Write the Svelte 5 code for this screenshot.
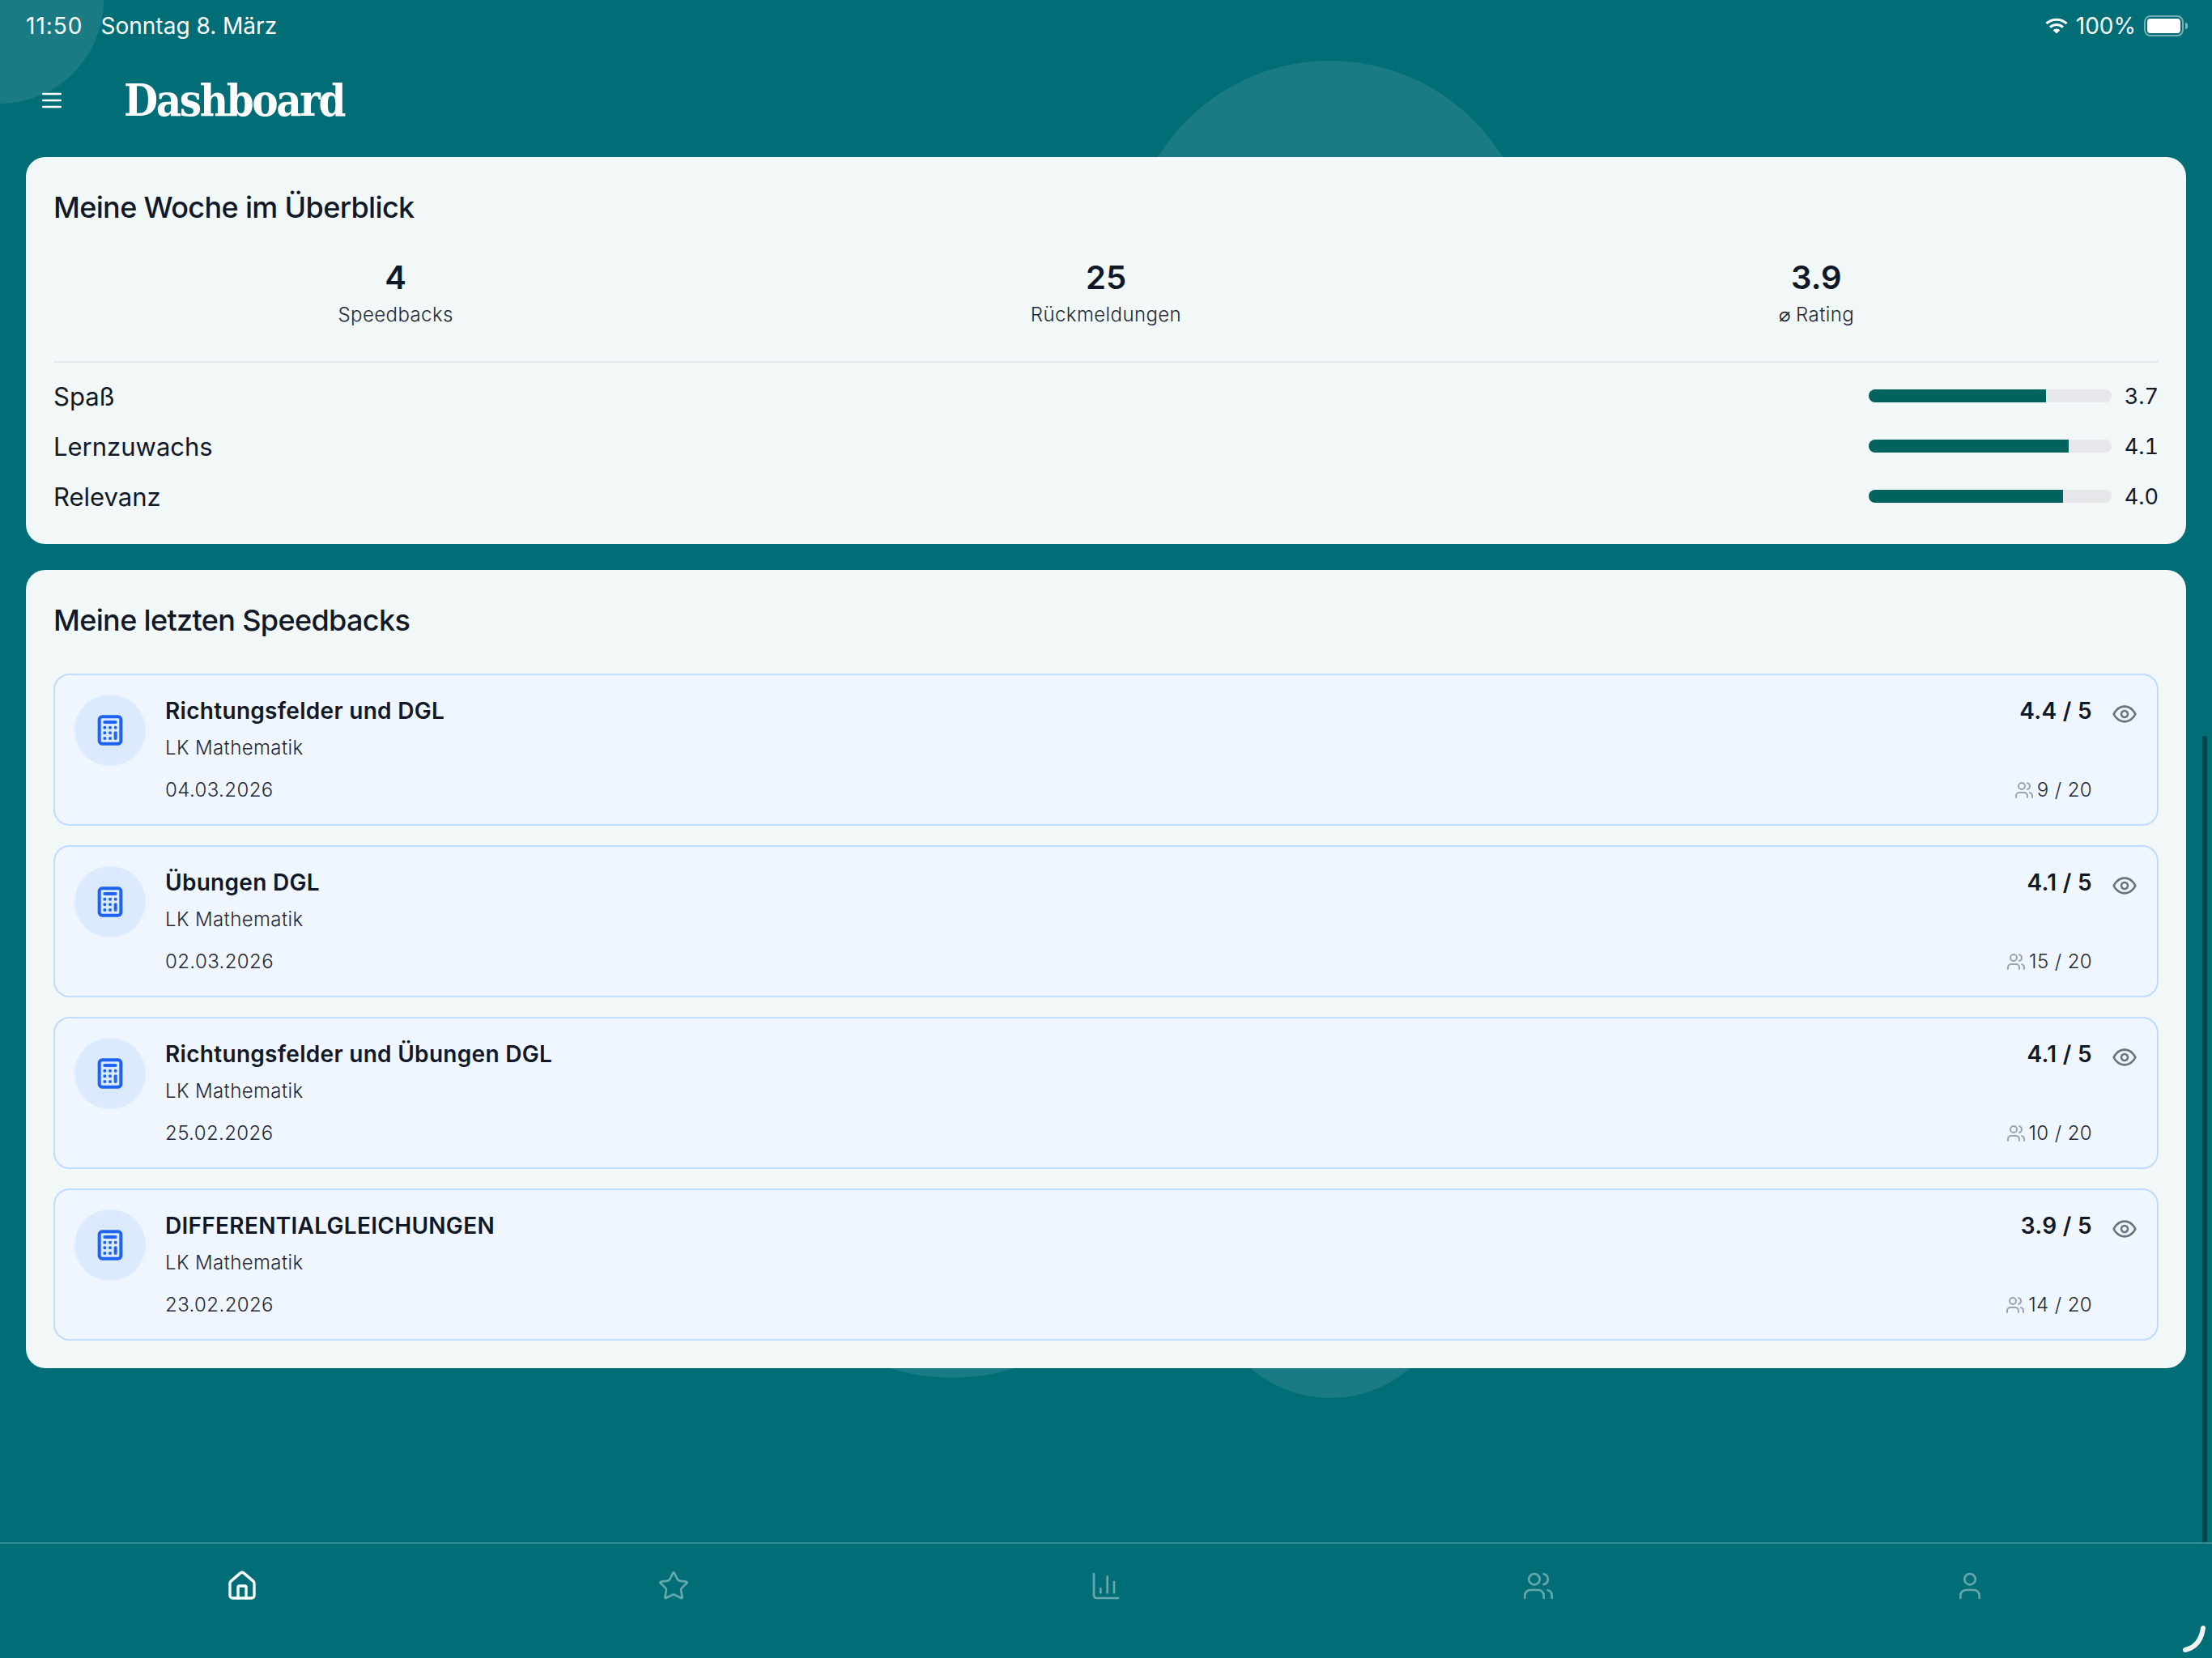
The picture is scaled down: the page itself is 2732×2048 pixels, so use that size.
<script>
  const stats = [
    { value: '4', label: 'Speedbacks' },
    { value: '25', label: 'Rückmeldungen' },
    { value: '3.9', label: '⌀ Rating' }
  ];

  const ratings = [
    { label: 'Spaß', value: '3.7', pct: 73 },
    { label: 'Lernzuwachs', value: '4.1', pct: 82.4 },
    { label: 'Relevanz', value: '4.0', pct: 80 }
  ];

  const speedbacks = [
    { title: 'Richtungsfelder und DGL', date: '04.03.2026', score: '4.4', count: '9 / 20' },
    { title: 'Übungen DGL', date: '02.03.2026', score: '4.1', count: '15 / 20' },
    { title: 'Richtungsfelder und Übungen DGL', date: '25.02.2026', score: '4.1', count: '10 / 20' },
    { title: 'DIFFERENTIALGLEICHUNGEN', date: '23.02.2026', score: '3.9', count: '14 / 20' }
  ];
</script>

<div class="page">
  <div class="blob blob-corner"></div>
  <div class="blob blob-top"></div>
  <div class="blob blob-left"></div>
  <div class="blob blob-small"></div>

  <div class="statusbar">
    <div class="status-left">
      <span class="time">11:50</span>
      <span>Sonntag 8. März</span>
    </div>
    <div class="status-right">
      <svg class="wifi" viewBox="0 0 28 20" width="28" height="20">
        <path d="M1.5 7.2a18 18 0 0 1 25 0" fill="none" stroke="#fff" stroke-width="3" />
        <path d="M6 11.6a11.6 11.6 0 0 1 16 0" fill="none" stroke="#fff" stroke-width="3" />
        <path d="M9.6 15.2 14 19.6l4.4-4.4a6.4 6.4 0 0 0-8.8 0z" fill="#fff" />
      </svg>
      <span>100%</span>
      <div class="battery">
        <div class="battery-fill"></div>
      </div>
      <div class="battery-nub"></div>
    </div>
  </div>

  <header class="topbar">
    <svg class="lucide menu" viewBox="0 0 24 24" width="32" height="32">
      <line x1="4" y1="6" x2="20" y2="6" />
      <line x1="4" y1="12" x2="20" y2="12" />
      <line x1="4" y1="18" x2="20" y2="18" />
    </svg>
    <h1>Dashboard</h1>
  </header>

  <main class="content">
    <section class="card week">
      <h2>Meine Woche im Überblick</h2>
      <div class="stats">
        {#each stats as stat}
          <div class="stat">
            <div class="stat-value">{stat.value}</div>
            <div class="stat-label">{stat.label}</div>
          </div>
        {/each}
      </div>
      <div class="ratings">
        {#each ratings as rating}
          <div class="rating">
            <span class="rating-label">{rating.label}</span>
            <div class="rating-right">
              <div class="track">
                <div class="fill" style="width: {rating.pct}%"></div>
              </div>
              <span class="rating-value">{rating.value}</span>
            </div>
          </div>
        {/each}
      </div>
    </section>

    <section class="card recent">
      <h2>Meine letzten Speedbacks</h2>
      <div class="list">
        {#each speedbacks as item}
          <article class="item">
            <div class="item-icon">
              <svg class="lucide calc" viewBox="0 0 24 24" width="40" height="40">
                <rect x="4" y="2" width="16" height="20" rx="2" />
                <line x1="8" y1="6" x2="16" y2="6" />
                <line x1="16" y1="14" x2="16" y2="18" />
                <path d="M16 10h.01M12 10h.01M8 10h.01M12 14h.01M8 14h.01M12 18h.01M8 18h.01" />
              </svg>
            </div>
            <div class="item-main">
              <div class="item-title">{item.title}</div>
              <div class="item-sub">LK Mathematik</div>
              <div class="item-date">{item.date}</div>
            </div>
            <div class="item-side">
              <div class="item-score">{item.score} / 5</div>
              <div class="item-count">
                <svg class="lucide" viewBox="0 0 24 24" width="24" height="24">
                  <path d="M16 21v-2a4 4 0 0 0-4-4H6a4 4 0 0 0-4 4v2" />
                  <circle cx="9" cy="7" r="4" />
                  <path d="M22 21v-2a4 4 0 0 0-3-3.87" />
                  <path d="M16 3.13a4 4 0 0 1 0 7.75" />
                </svg>
                <span>{item.count}</span>
              </div>
            </div>
            <svg class="lucide eye" viewBox="0 0 24 24" width="32" height="32">
              <path d="M2 12s3-7 10-7 10 7 10 7-3 7-10 7-10-7-10-7Z" />
              <circle cx="12" cy="12" r="3" />
            </svg>
          </article>
        {/each}
      </div>
    </section>
  </main>

  <nav class="tabs">
    <div class="tab active">
      <svg class="lucide" viewBox="0 0 24 24" width="40" height="40">
        <path d="M15 21v-8a1 1 0 0 0-1-1h-4a1 1 0 0 0-1 1v8" />
        <path d="M3 10a2 2 0 0 1 .709-1.528l7-5.999a2 2 0 0 1 2.582 0l7 5.999A2 2 0 0 1 21 10v9a2 2 0 0 1-2 2H5a2 2 0 0 1-2-2z" />
      </svg>
    </div>
    <div class="tab">
      <svg class="lucide" viewBox="0 0 24 24" width="40" height="40">
        <path d="M11.525 2.295a.53.53 0 0 1 .95 0l2.31 4.679a2.123 2.123 0 0 0 1.595 1.16l5.166.756a.53.53 0 0 1 .294.904l-3.736 3.638a2.123 2.123 0 0 0-.611 1.878l.882 5.14a.53.53 0 0 1-.771.56l-4.618-2.428a2.122 2.122 0 0 0-1.973 0L6.396 21.01a.53.53 0 0 1-.77-.56l.881-5.139a2.122 2.122 0 0 0-.611-1.879L2.16 9.795a.53.53 0 0 1 .294-.906l5.165-.755a2.122 2.122 0 0 0 1.597-1.16z" />
      </svg>
    </div>
    <div class="tab">
      <svg class="lucide" viewBox="0 0 24 24" width="40" height="40">
        <path d="M3 3v16a2 2 0 0 0 2 2h16" />
        <path d="M18 17V9" />
        <path d="M13 17V5" />
        <path d="M8 17v-3" />
      </svg>
    </div>
    <div class="tab">
      <svg class="lucide" viewBox="0 0 24 24" width="40" height="40">
        <path d="M16 21v-2a4 4 0 0 0-4-4H6a4 4 0 0 0-4 4v2" />
        <circle cx="9" cy="7" r="4" />
        <path d="M22 21v-2a4 4 0 0 0-3-3.87" />
        <path d="M16 3.13a4 4 0 0 1 0 7.75" />
      </svg>
    </div>
    <div class="tab">
      <svg class="lucide" viewBox="0 0 24 24" width="40" height="40">
        <path d="M19 21v-2a4 4 0 0 0-4-4H9a4 4 0 0 0-4 4v2" />
        <circle cx="12" cy="7" r="4" />
      </svg>
    </div>
  </nav>

  <div class="scrollbar"></div>

  <!-- pencil hover mark in the corner -->
  <svg class="pencil" viewBox="0 0 36 36" width="36" height="36">
    <path d="M31 4C29 18 22 28 9 31" fill="none" stroke="#f2f4f4" stroke-width="6" stroke-linecap="round" />
  </svg>
</div>

<style>
  :global(body) {
    margin: 0;
    background: #006d77;
  }

  .page {
    position: relative;
    width: 2732px;
    height: 2048px;
    overflow: hidden;
    display: flex;
    flex-direction: column;
    background: #006d77;
    color: #111827;
    font-family: Inter, "Liberation Sans", sans-serif;
  }

  /* Dekor-Kreise hinter den Karten */
  .blob {
    position: absolute;
    border-radius: 50%;
    background: rgba(255, 255, 255, 0.1);
  }

  .blob-corner {
    left: -128px;
    top: -128px;
    width: 256px;
    height: 256px;
  }

  .blob-top {
    left: 1393px;
    top: 75px;
    width: 500px;
    height: 500px;
  }

  .blob-left {
    left: 922px;
    top: 1194px;
    width: 508px;
    height: 508px;
  }

  .blob-small {
    left: 1493px;
    top: 1427px;
    width: 300px;
    height: 300px;
  }

  .statusbar {
    position: relative;
    height: 64px;
    padding: 0 30px 0 32px;
    display: flex;
    justify-content: space-between;
    align-items: center;
    color: #fff;
    font-size: 28px;
  }

  .status-left {
    display: flex;
    gap: 22px;
  }

  .time {
    letter-spacing: 1px;
  }

  .status-right {
    display: flex;
    align-items: center;
    gap: 10px;
  }

  .battery {
    width: 49px;
    height: 26px;
    box-sizing: border-box;
    border: 2px solid rgba(255, 255, 255, 0.45);
    border-radius: 8px;
    padding: 2px;
  }

  .battery-fill {
    width: 100%;
    height: 100%;
    background: #fff;
    border-radius: 4px;
  }

  .battery-nub {
    width: 3px;
    height: 8px;
    margin-left: -8px;
    border-radius: 0 3px 3px 0;
    background: rgba(255, 255, 255, 0.5);
  }

  .topbar {
    position: relative;
    height: 120px;
    padding: 0 0 10px 48px;
    display: flex;
    align-items: center;
    color: #fff;
  }

  .topbar h1 {
    margin: 0 0 0 73px;
    font-family: "DejaVu Serif", serif;
    font-stretch: condensed;
    font-size: 54px;
    font-weight: 700;
    letter-spacing: -2.4px;
  }

  .lucide {
    fill: none;
    stroke: currentColor;
    stroke-width: 2;
    stroke-linecap: round;
    stroke-linejoin: round;
    flex: none;
  }

  .content {
    position: relative;
    flex: 1;
    padding: 0 32px;
    display: flex;
    flex-direction: column;
    gap: 32px;
  }

  .card {
    background: rgba(255, 255, 255, 0.95);
    border-radius: 24px;
    padding: 36px 34px;
  }

  .card h2 {
    margin: 0;
    font-size: 36px;
    line-height: 52px;
    font-weight: 500;
    letter-spacing: -0.65px;
  }

  .stats {
    display: grid;
    grid-template-columns: repeat(3, 1fr);
    gap: 32px;
    margin-top: 36px;
    text-align: center;
  }

  .stat-value {
    font-size: 40px;
    line-height: 50px;
    font-weight: 600;
  }

  .stat-label {
    margin-top: 3px;
    font-size: 24px;
    line-height: 36px;
    font-weight: 300;
    letter-spacing: 0.4px;
    color: #1f2937;
  }

  .ratings {
    margin-top: 39px;
    padding-top: 18px;
    border-top: 2px solid #e5e7eb;
    display: flex;
    flex-direction: column;
    gap: 16px;
  }

  .rating {
    height: 46px;
    display: flex;
    justify-content: space-between;
    align-items: center;
    font-size: 31px;
  }

  .rating-right {
    display: flex;
    align-items: center;
    gap: 16px;
  }

  .track {
    width: 300px;
    height: 16px;
    border-radius: 8px;
    background: #e5e7eb;
    overflow: hidden;
  }

  .fill {
    height: 100%;
    background: #00625c;
  }

  .rating-value {
    font-size: 27px;
    font-variant-numeric: tabular-nums;
  }

  .recent {
    padding-bottom: 34px;
  }

  .list {
    margin-top: 40px;
    display: flex;
    flex-direction: column;
    gap: 24px;
  }

  .item {
    height: 188px;
    box-sizing: border-box;
    padding: 24px;
    display: flex;
    gap: 24px;
    background: #eff6ff;
    border: 2px solid #bfdbfe;
    border-radius: 20px;
  }

  .item-icon {
    width: 88px;
    height: 88px;
    border-radius: 50%;
    background: #dbeafe;
    color: #1f63f2;
    display: flex;
    align-items: center;
    justify-content: center;
    flex: none;
  }

  .calc {
    stroke-width: 2.4;
  }

  .item-main {
    flex: 1;
  }

  .item-title {
    font-size: 28px;
    line-height: 40px;
    font-weight: 600;
    letter-spacing: 0.3px;
  }

  .item-sub {
    margin-top: 8px;
    font-size: 24px;
    line-height: 36px;
    font-weight: 300;
    letter-spacing: 0.4px;
    color: #1f2937;
  }

  .item-date {
    margin-top: 16px;
    font-size: 24px;
    line-height: 36px;
    font-weight: 300;
    letter-spacing: 0.4px;
    color: #1f2937;
  }

  .item-side {
    display: flex;
    flex-direction: column;
    justify-content: space-between;
    align-items: flex-end;
  }

  .item-score {
    font-size: 28px;
    line-height: 40px;
    font-weight: 600;
    letter-spacing: 0.3px;
  }

  .item-count {
    display: flex;
    align-items: center;
    gap: 4px;
    font-size: 24px;
    line-height: 36px;
    font-weight: 300;
    letter-spacing: 0.4px;
    color: #1f2937;
  }

  .item-count .lucide {
    color: #9ca3af;
  }

  .eye {
    margin-top: 8px;
    color: #6b7280;
  }

  .tabs {
    position: relative;
    height: 141px;
    padding: 0 32px;
    border-top: 2px solid rgba(255, 255, 255, 0.2);
    display: grid;
    grid-template-columns: repeat(5, 1fr);
  }

  .tab {
    padding-top: 32px;
    display: flex;
    justify-content: center;
    color: rgba(255, 255, 255, 0.4);
  }

  .tab .lucide {
    stroke-width: 1.6;
  }

  .tab.active {
    color: #fff;
  }

  .tab.active .lucide {
    stroke-width: 2;
  }

  .scrollbar {
    position: absolute;
    left: 2720px;
    top: 909px;
    width: 6px;
    height: 996px;
    border-radius: 3px 3px 0 0;
    background: rgba(0, 0, 0, 0.35);
  }

  .pencil {
    position: absolute;
    right: 6px;
    bottom: 5px;
  }
</style>
